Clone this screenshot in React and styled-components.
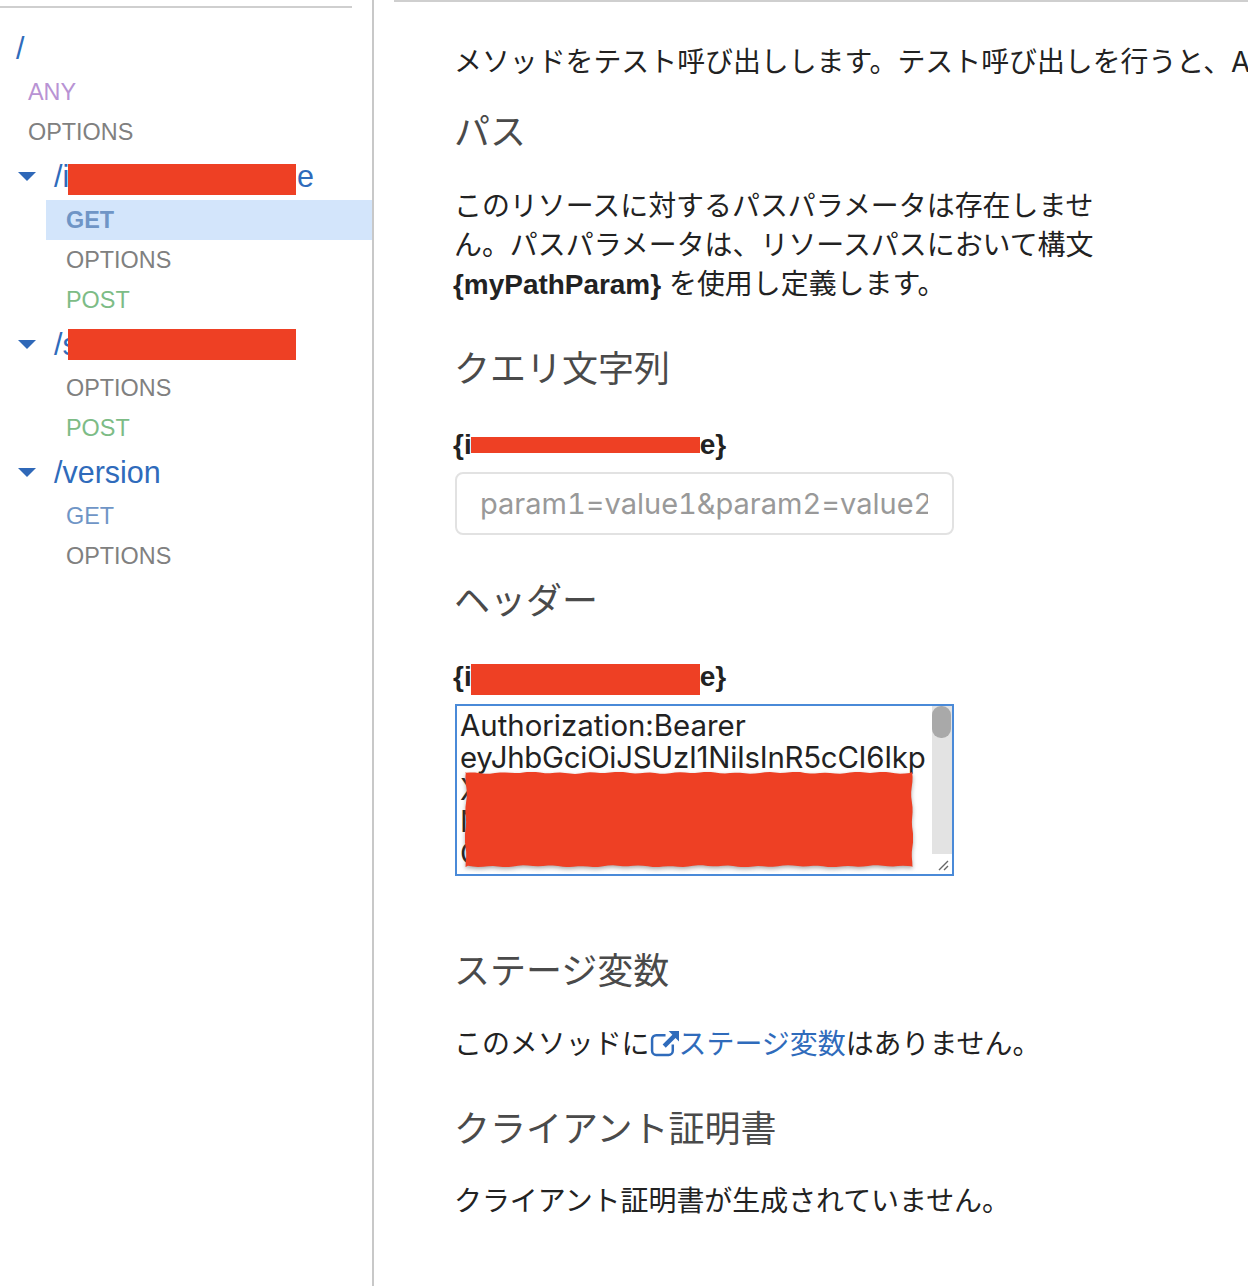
import React from "react";
import styled, { createGlobalStyle } from "styled-components";

const GlobalStyle = createGlobalStyle`
  html, body {
    margin: 0;
    padding: 0;
    background: #fff;
  }
  body {
    font-family: "Inter", "Noto Sans CJK JP", sans-serif;
    color: #222;
  }
`;

const METHOD_COLORS = {
  ANY: "#b893d4",
  OPTIONS: "#808080",
  POST: "#7dbc86",
  GET: "#6f95c6",
};

const resources = [
  {
    path: "/i",
    tail: "e",
    maskTop: 12,
    methods: [{ name: "GET", active: true }, { name: "OPTIONS" }, { name: "POST" }],
  },
  { path: "/s", maskTop: 9, methods: [{ name: "OPTIONS" }, { name: "POST" }] },
  { path: "/version", methods: [{ name: "GET" }, { name: "OPTIONS" }] },
];

// torn edge of the scribbled-out part of the header value
const MASK_W = 448;
const MASK_H = 95;
const wobble = (i) => 0.8 + Math.sin(i * 2.3) * 0.6 + Math.sin(i * 5.1) * 0.5;
const maskEdge = () => {
  const points = [];
  for (let x = 0; x <= MASK_W; x += 5) points.push(`${x}px ${wobble(x).toFixed(1)}px`);
  for (let y = 0; y <= MASK_H; y += 5) points.push(`${MASK_W - wobble(y)}px ${y}px`);
  for (let x = MASK_W; x >= 0; x -= 5) points.push(`${x}px ${MASK_H - wobble(x)}px`);
  for (let y = MASK_H; y >= 0; y -= 5) points.push(`${wobble(y)}px ${y}px`);
  return points.join(", ");
};

const Caret = () => (
  <CaretIcon viewBox="0 0 18 9">
    <path d="M0 0h18L9 9z" fill="#2f68b8" />
  </CaretIcon>
);

const ExternalIcon = () => (
  <LinkIcon viewBox="0 0 28 26">
    <path
      d="M15 5H6a4 4 0 0 0-4 4v11a4 4 0 0 0 4 4h12a4 4 0 0 0 4-4v-6"
      fill="none"
      stroke="#2f6bbb"
      strokeWidth="2.4"
    />
    <path d="M18 1h10v10l-3.4-3.4-9.4 9.4-3-3 9.4-9.4z" fill="#2f6bbb" />
  </LinkIcon>
);

const App = () => {
  return (
    <Page>
      <GlobalStyle />
      <Sidebar>
        <SideRule />
        <RootRow>/</RootRow>
        <RootMethod $color={METHOD_COLORS.ANY}>ANY</RootMethod>
        <RootMethod $color={METHOD_COLORS.OPTIONS}>OPTIONS</RootMethod>
        {resources.map((resource) => (
          <div key={resource.path}>
            <ResourceRow>
              <Caret />
              <ResourcePath>
                <PathText $masked={resource.maskTop}>{resource.path}</PathText>
                {resource.tail && <span>{resource.tail}</span>}
                {resource.maskTop && <PathMask $top={resource.maskTop} />}
              </ResourcePath>
            </ResourceRow>
            {resource.methods.map((method) => (
              <MethodRow
                key={method.name}
                $active={method.active}
                $color={METHOD_COLORS[method.name]}
              >
                {method.name}
              </MethodRow>
            ))}
          </div>
        ))}
      </Sidebar>
      <Main>
        <TopRule />
        <Content>
          <Lead>メソッドをテスト呼び出しします。テスト呼び出しを行うと、API Gateway</Lead>
          <Heading $top={28}>パス</Heading>
          <Text $top={33}>
            このリソースに対するパスパラメータは存在しません。パスパラメータは、リソースパスにおいて構文
            <Strong>{"{myPathParam}"}</Strong> を使用し定義します。
          </Text>
          <Heading $top={43}>クエリ文字列</Heading>
          <Label $top={36}>
            {"{i"}
            <LabelMask $thin />
            {"e}"}
          </Label>
          <QueryInput placeholder="param1=value1&param2=value2" readOnly />
          <Heading $top={44}>ヘッダー</Heading>
          <Label $top={36}>
            {"{i"}
            <LabelMask />
            {"e}"}
          </Label>
          <HeaderBox>
            <HeaderText>
              Authorization:Bearer
              <br />
              <TokenLine>eyJhbGciOiJSUzI1NiIsInR5cCI6Ikp</TokenLine>
              <br />
              X
              <br />
              N
              <br />C
            </HeaderText>
            <ScrollTrack>
              <ScrollThumb />
              <ResizeCorner>
                <svg width="18" height="18" viewBox="0 0 18 18">
                  <path d="M7 16 16 7M12 16l4-4" stroke="#666" strokeWidth="1.4" />
                </svg>
              </ResizeCorner>
            </ScrollTrack>
            <HeaderMask>
              <HeaderMaskFill />
            </HeaderMask>
          </HeaderBox>
          <Heading $top={73}>ステージ変数</Heading>
          <Text $top={32}>
            このメソッドに
            <StageLink href="#">
              <ExternalIcon />
              ステージ変数
            </StageLink>
            はありません。
          </Text>
          <Heading $top={43}>クライアント証明書</Heading>
          <Text $top={31}>クライアント証明書が生成されていません。</Text>
        </Content>
      </Main>
    </Page>
  );
};

const Page = styled.div`
  display: flex;
  width: 1248px;
  height: 1286px;
  overflow: hidden;
`;

const Sidebar = styled.aside`
  flex: none;
  width: 372px;
  border-right: 2px solid #c8c8c8;
  font-family: "Liberation Sans", Arial, sans-serif;
`;

const SideRule = styled.div`
  width: 352px;
  height: 2px;
  margin: 6px 0 16px;
  background: #cfcfcf;
`;

const RootRow = styled.div`
  height: 48px;
  padding-left: 16px;
  font-size: 30.5px;
  line-height: 48px;
  color: #2f6bbb;
`;

const RootMethod = styled.div`
  height: 40px;
  padding-left: 28px;
  font-size: 23.4px;
  line-height: 40px;
  color: ${(props) => props.$color};
`;

const ResourceRow = styled.div`
  display: flex;
  align-items: center;
  height: 48px;
  padding-left: 18px;
`;

const CaretIcon = styled.svg`
  flex: none;
  width: 18px;
  height: 9px;
  margin-right: 18px;
`;

const ResourcePath = styled.div`
  position: relative;
  display: flex;
  font-size: 30.5px;
  line-height: 48px;
  color: #2f6bbb;
`;

const PathText = styled.span`
  width: ${(props) => (props.$masked ? "243px" : "auto")};
`;

const PathMask = styled.span`
  position: absolute;
  left: 14px;
  top: ${(props) => props.$top}px;
  width: 228px;
  height: 31px;
  background: #ee4024;
`;

const MethodRow = styled.div`
  height: 40px;
  margin-left: 46px;
  padding-left: 20px;
  font-size: 23.4px;
  line-height: 40px;
  font-weight: ${(props) => (props.$active ? 700 : 400)};
  color: ${(props) => props.$color};
  background: ${(props) => (props.$active ? "#d3e5fb" : "transparent")};
`;

const Main = styled.main`
  flex: 1;
  min-width: 0;
  padding-left: 20px;
`;

const TopRule = styled.div`
  height: 2px;
  background: #cfcfcf;
`;

const Content = styled.div`
  padding: 40px 0 0 60px;
  overflow: hidden;
`;

const Lead = styled.p`
  margin: 0;
  font-size: 27.9px;
  line-height: 40px;
  white-space: nowrap;
  color: #222;
`;

const Heading = styled.h3`
  margin: ${(props) => props.$top}px 0 0;
  font-size: 36px;
  font-weight: 400;
  line-height: 44px;
  color: #4a4a4a;
`;

const Text = styled.p`
  width: 650px;
  margin: ${(props) => props.$top}px 0 0;
  font-size: 27.95px;
  line-height: 39px;
  color: #222;
`;

const Strong = styled.strong`
  margin-left: -1px;
  font-family: "Liberation Sans", Arial, sans-serif;
  font-weight: 700;
`;

const Label = styled.div`
  display: flex;
  align-items: flex-start;
  height: 36px;
  margin: ${(props) => props.$top}px 0 0 -1px;
  font-family: "Liberation Sans", Arial, sans-serif;
  font-size: 28px;
  font-weight: 700;
  line-height: 36px;
  color: #222;
`;

const LabelMask = styled.span`
  display: block;
  width: 229px;
  height: ${(props) => (props.$thin ? "16px" : "31px")};
  margin: ${(props) => (props.$thin ? "10px" : "5px")} 0 0 -1px;
  background: #ee4024;
`;

const QueryInput = styled.input`
  display: block;
  box-sizing: border-box;
  width: 499px;
  height: 63px;
  margin: 9px 0 0 1px;
  padding: 0 24px 0 23px;
  border: 2px solid #e2e2e2;
  border-radius: 8px;
  outline: none;
  font-family: "Inter", "Noto Sans CJK JP", sans-serif;
  font-size: 29px;
  font-feature-settings: "tnum";
  color: #222;
  &::placeholder {
    color: #999;
    opacity: 1;
  }
`;

const HeaderBox = styled.div`
  position: relative;
  display: flex;
  box-sizing: border-box;
  width: 499px;
  height: 172px;
  margin: 9px 0 0 1px;
  border: 2px solid #4a8ad8;
  overflow: hidden;
`;

const HeaderText = styled.div`
  flex: 1;
  min-width: 0;
  padding: 4px 0 0 3px;
  font-size: 29.4px;
  line-height: 32px;
  color: #222;
  white-space: nowrap;
  overflow: hidden;
`;

const TokenLine = styled.span`
  letter-spacing: -0.26px;
`;

const ScrollTrack = styled.div`
  position: relative;
  flex: none;
  width: 20px;
  background: #e3e3e3;
`;

const ScrollThumb = styled.div`
  width: 19px;
  height: 32px;
  border-radius: 9px;
  background: #a9a9a9;
`;

const ResizeCorner = styled.div`
  position: absolute;
  right: 0;
  bottom: 0;
  width: 20px;
  height: 20px;
  background: #fff;
`;

const HeaderMask = styled.div`
  position: absolute;
  left: 8px;
  top: 66px;
  filter: drop-shadow(0 2px 2px rgba(110, 110, 110, 0.6));
`;

const HeaderMaskFill = styled.div`
  width: ${MASK_W}px;
  height: ${MASK_H}px;
  background: #ee4024;
  clip-path: polygon(${maskEdge()});
`;

const StageLink = styled.a`
  color: #2f6bbb;
  text-decoration: none;
`;

const LinkIcon = styled.svg`
  width: 29px;
  height: 27px;
  vertical-align: -3px;
`;

export default App;
